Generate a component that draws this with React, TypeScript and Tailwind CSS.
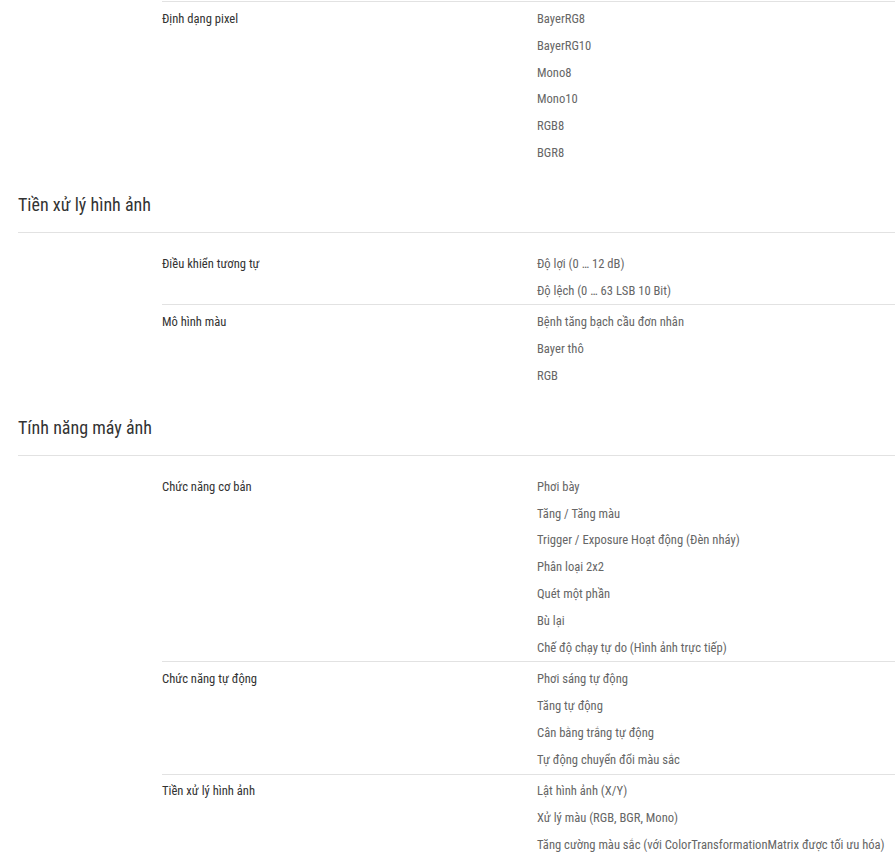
import { ChevronDown } from 'lucide-react';

type Row = { label: string; values: string[] };
type Section = { title?: string; rows: Row[] };

const sections: Section[] = [
  {
    rows: [
      { label: 'Định dạng pixel', values: ['BayerRG8', 'BayerRG10', 'Mono8', 'Mono10', 'RGB8', 'BGR8'] },
    ],
  },
  {
    title: 'Tiền xử lý hình ảnh',
    rows: [
      { label: 'Điều khiển tương tự', values: ['Độ lợi (0 … 12 dB)', 'Độ lệch (0 … 63 LSB 10 Bit)'] },
      { label: 'Mô hình màu', values: ['Bệnh tăng bạch cầu đơn nhân', 'Bayer thô', 'RGB'] },
    ],
  },
  {
    title: 'Tính năng máy ảnh',
    rows: [
      {
        label: 'Chức năng cơ bản',
        values: [
          'Phơi bày',
          'Tăng / Tăng màu',
          'Trigger / Exposure Hoạt động (Đèn nháy)',
          'Phân loại 2x2',
          'Quét một phần',
          'Bù lại',
          'Chế độ chạy tự do (Hình ảnh trực tiếp)',
        ],
      },
      {
        label: 'Chức năng tự động',
        values: ['Phơi sáng tự động', 'Tăng tự động', 'Cân bằng trắng tự động', 'Tự động chuyển đổi màu sắc'],
      },
      {
        label: 'Tiền xử lý hình ảnh',
        values: [
          'Lật hình ảnh (X/Y)',
          'Xử lý màu (RGB, BGR, Mono)',
          'Tăng cường màu sắc (với ColorTransformationMatrix được tối ưu hóa)',
        ],
      },
    ],
  },
];

function SpecRow({ r, first }: { r: Row; first: boolean }) {
  return (
    <div className={`ml-[144px] flex pt-[4px] ${first ? '' : 'border-t border-[#e2e2e2]'}`}>
      <div className="w-[375px] h-[26.8px] flex items-center text-[12.6px] text-[#333]">{r.label}</div>
      <ul className="flex-1">
        {r.values.map(v => (
          <li key={v} className="h-[26.8px] flex items-center text-[12.6px] text-[#666] whitespace-nowrap">{v}</li>
        ))}
      </ul>
    </div>
  );
}

export default function App() {
  return (
    <div className="w-[895px] min-h-screen overflow-hidden bg-white font-['Roboto_Condensed','Roboto',sans-serif]">
      <div className="w-[920px] pl-[18px] pt-[1px]">
        {sections.map((s, i) => (
          <section key={i}>
            {s.title && (
              <div className="flex items-center justify-between pt-[24px] pb-[13px] border-b border-[#e2e2e2]">
                <h2 className="text-[18px] leading-[28px] text-[#333]">{s.title}</h2>
                <ChevronDown size={14} strokeWidth={2.5} className="text-[#555] mr-[13px]" />
              </div>
            )}
            <div className={s.title ? 'pt-[14px]' : ''}>
              {s.rows.map((r, j) => (
                <SpecRow key={r.label} r={r} first={j === 0 && !!s.title} />
              ))}
            </div>
          </section>
        ))}
      </div>
    </div>
  );
}
